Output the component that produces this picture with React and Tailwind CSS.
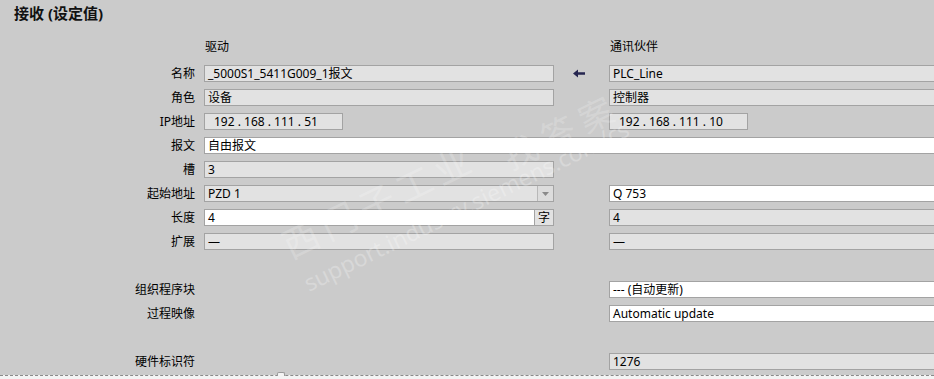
import React from 'react';

const font = "font-['Noto_Sans','Noto_Sans_CJK_SC',sans-serif]";

const Field = ({ value, white, className = '' }) => (
  <div
    className={`h-[17px] border border-[#a3a3a3] ${white ? 'bg-white' : 'bg-[#e2e2e2]'} pl-[3px] text-[12px] leading-[15px] text-black whitespace-pre overflow-hidden ${className}`}
  >
    {value}
  </div>
);

const Label = ({ children }) => (
  <div className="pr-[9px] pt-[4px] text-right text-[12px] leading-[17px] text-black">{children}</div>
);

const Row = ({ label, left, mid, right, span }) => (
  <div className="grid h-[24px] grid-cols-[204px_350px_55px_330px] items-start">
    <Label>{label}</Label>
    {span ? (
      <div className="col-span-3 pt-[4px]">{span}</div>
    ) : (
      <>
        <div className="pt-[4px]">{left}</div>
        <div className="flex justify-center pt-[4px]">{mid}</div>
        <div className="pt-[4px]">{right}</div>
      </>
    )}
  </div>
);

const Arrow = () => (
  <svg width="14" height="17" viewBox="0 0 14 17" className="-ml-[6px]">
    <path d="M1 8.5 L6 4.5 L6 7.3 L13 7.3 L13 9.7 L6 9.7 L6 12.5 Z" fill="#262650" />
  </svg>
);

const Dropdown = ({ value }) => (
  <div className="flex h-[17px] border border-[#a3a3a3] bg-[#e2e2e2] text-[12px] leading-[15px] text-black">
    <div className="flex-1 pl-[3px]">{value}</div>
    <div className="flex w-[16px] items-center justify-center border-l border-[#b8b8b8] bg-[#dcdcdc]">
      <svg width="7" height="4" viewBox="0 0 7 4">
        <path d="M0 0 L7 0 L3.5 4 Z" fill="#8a8a8a" />
      </svg>
    </div>
  </div>
);

const Unit = ({ value, unit }) => (
  <div className="flex h-[17px]">
    <div className="flex-1 border border-[#a3a3a3] bg-white pl-[3px] text-[12px] leading-[15px] text-black">{value}</div>
    <div className="w-[19px] border border-l-0 border-[#a3a3a3] bg-[#e2e2e2] text-center text-[12px] leading-[15px] text-black">{unit}</div>
  </div>
);

export default function App() {
  return (
    <div className={`relative h-[379px] w-[934px] overflow-hidden bg-[#cbcbcb] ${font}`}>
      <div className="h-[37px] pl-[14px] pt-[3px] text-[15px] font-bold leading-[20px] text-[#111]">接收 (设定值)</div>
      <div className="grid h-[24px] grid-cols-[204px_350px_55px_330px] text-[12px] leading-[17px] text-black">
        <div />
        <div className="pl-[1px] pt-[1px]">驱动</div>
        <div />
        <div className="pl-[1px] pt-[1px]">通讯伙伴</div>
      </div>
      <Row label="名称" left={<Field value="_5000S1_5411G009_1报文" />} mid={<Arrow />} right={<Field value="PLC_Line" />} />
      <Row label="角色" left={<Field value="设备" />} right={<Field value="控制器" />} />
      <Row
        label="IP地址"
        left={<Field className="w-[139px] pl-[9px]" value="192 . 168 . 111 . 51" />}
        right={<Field className="w-[139px] pl-[9px]" value="192 . 168 . 111 . 10" />}
      />
      <Row label="报文" span={<Field white value="自由报文" />} />
      <Row label="槽" left={<Field value="3" />} />
      <Row label="起始地址" left={<Dropdown value="PZD 1" />} right={<Field white value="Q 753" />} />
      <Row label="长度" left={<Unit value="4" unit="字" />} right={<Field value="4" />} />
      <Row label="扩展" left={<Field value="—" />} right={<Field value="—" />} />
      <div className="h-[24px]" />
      <Row label="组织程序块" right={<Field white value="--- (自动更新)" />} />
      <Row label="过程映像" right={<Field white value="Automatic update" />} />
      <div className="h-[24px]" />
      <Row label="硬件标识符" right={<Field value="1276" />} />
      <div className="relative mt-[2px] h-[6px] border-t border-dashed border-[#8a8a8a] bg-[#f4f4f4]">
        <div className="absolute left-[277px] top-[-4px] h-[4px] w-[8px] rounded-t-[2px] border border-b-0 border-[#9a9a9a] bg-[#f4f4f4]" />
      </div>

      {/* watermark */}
      <div className="pointer-events-none absolute left-[505px] top-[140px] origin-left -rotate-[26deg] select-none text-[34px] leading-[38px] tracking-[8px] text-white/20">
        找答案
      </div>
      <div className="pointer-events-none absolute left-[305px] top-[270px] origin-left -rotate-[26deg] select-none text-[23px] leading-[28px] text-white/25">
        support.industry.siemens.com/cs
      </div>
      <div className="pointer-events-none absolute left-[285px] top-[228px] origin-left -rotate-[26deg] select-none text-[36px] leading-[40px] tracking-[6px] text-white/20">
        西门子工业
      </div>
    </div>
  );
}
